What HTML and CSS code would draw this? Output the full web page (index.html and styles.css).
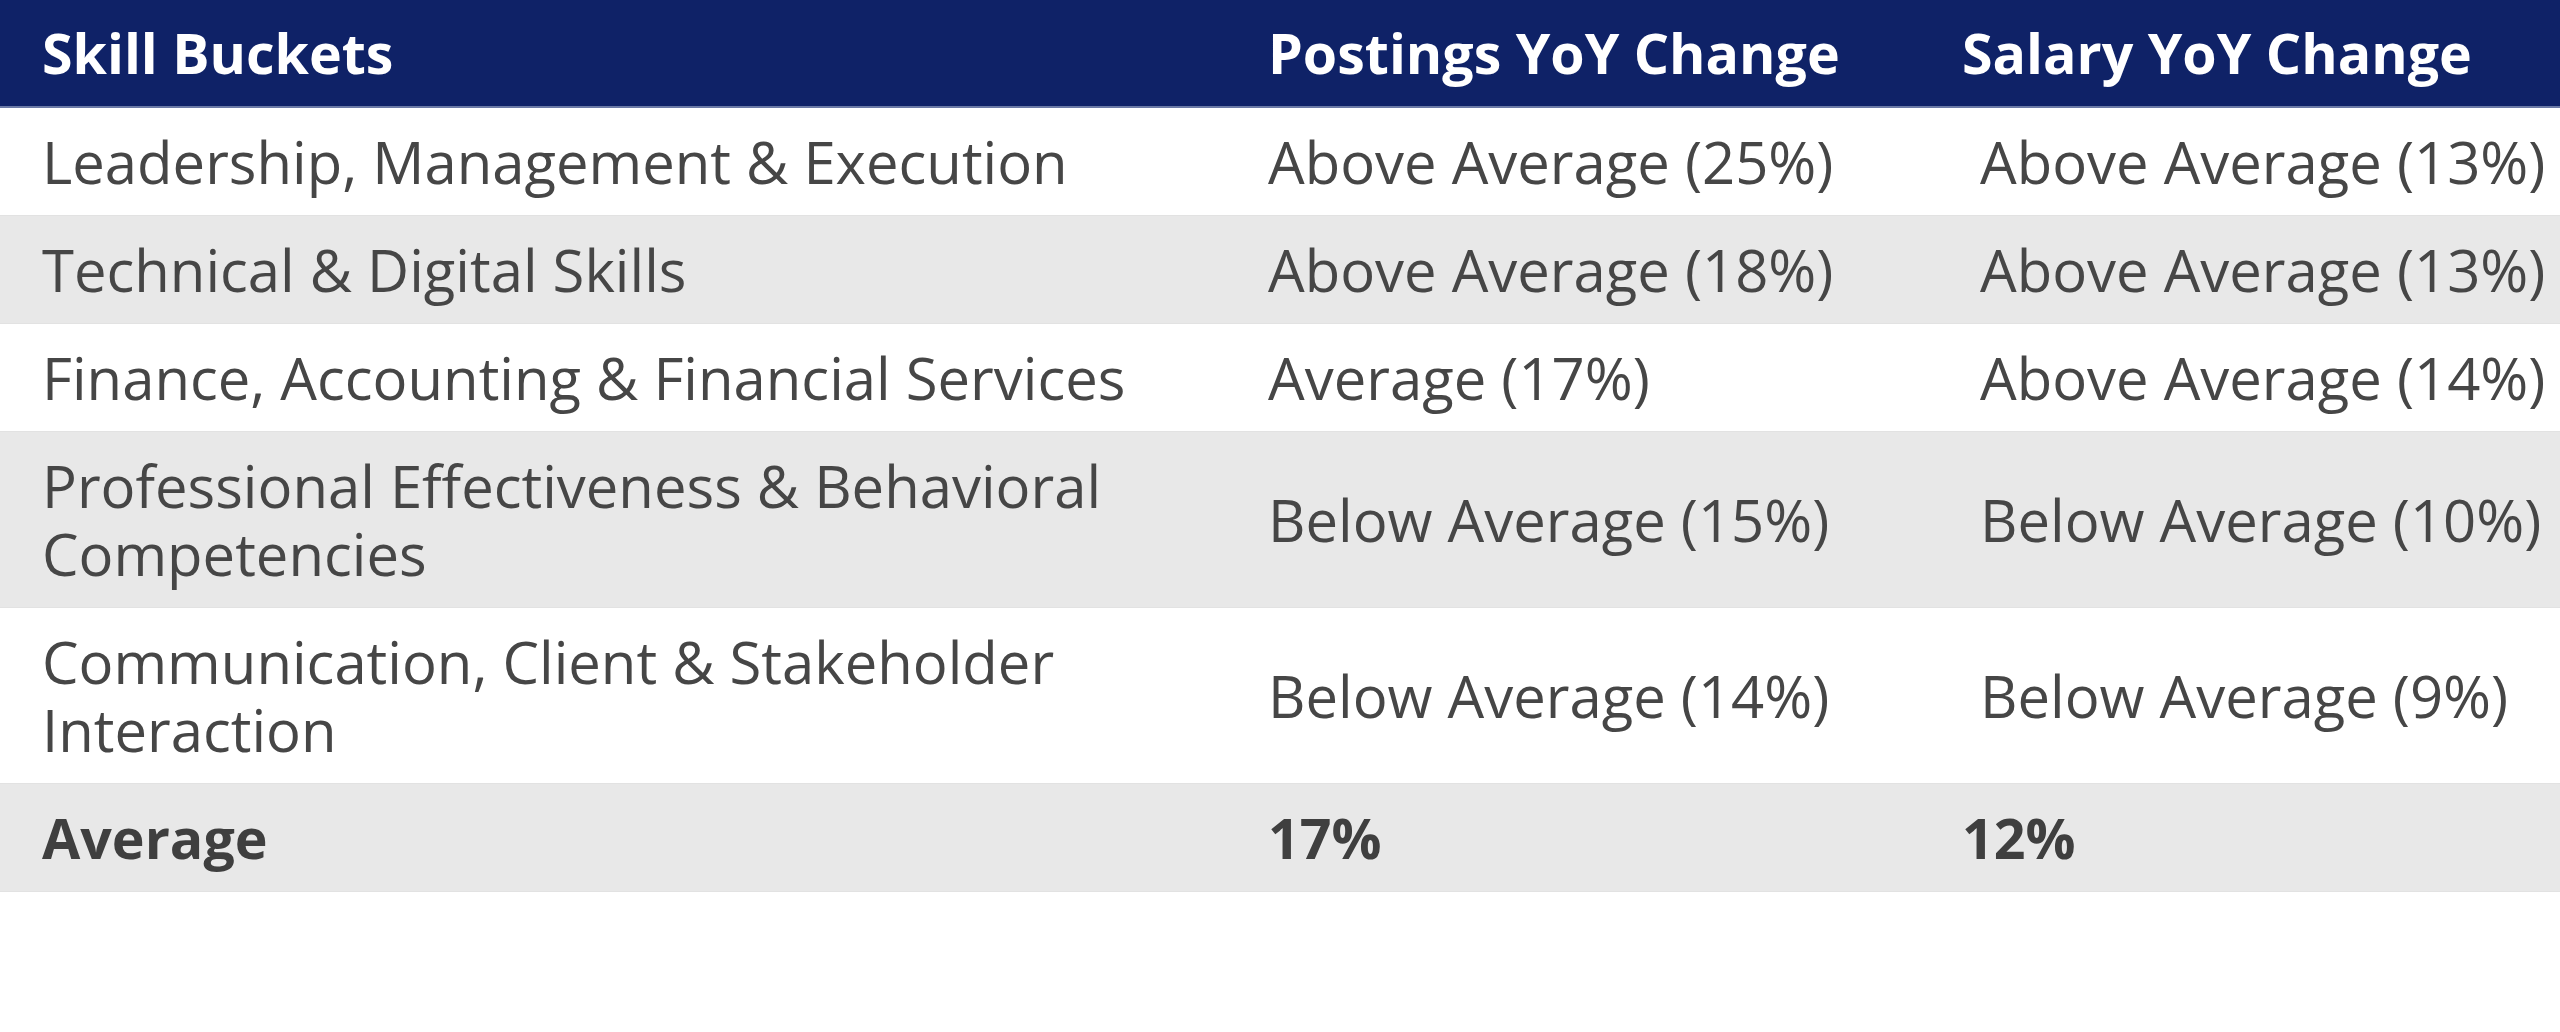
FILE: index.html
```html
<!DOCTYPE html>
<html lang="en">
<head>
<meta charset="utf-8">
<title>Skill Buckets</title>
<link rel="stylesheet" href="styles.css">
</head>
<body>
<table class="skills">
  <colgroup>
    <col class="c-skill">
    <col class="c-post">
    <col class="c-sal">
  </colgroup>
  <thead>
    <tr>
      <th>Skill Buckets</th>
      <th>Postings YoY Change</th>
      <th>Salary YoY Change</th>
    </tr>
  </thead>
  <tbody>
    <tr>
      <td>Leadership, Management &amp; Execution</td>
      <td class="val">Above Average (25%)</td>
      <td class="val sal">Above Average (13%)</td>
    </tr>
    <tr class="alt">
      <td>Technical &amp; Digital Skills</td>
      <td class="val">Above Average (18%)</td>
      <td class="val sal">Above Average (13%)</td>
    </tr>
    <tr>
      <td>Finance, Accounting &amp; Financial Services</td>
      <td class="val">Average (17%)</td>
      <td class="val sal">Above Average (14%)</td>
    </tr>
    <tr class="alt">
      <td>Professional Effectiveness &amp; Behavioral Competencies</td>
      <td class="val">Below Average (15%)</td>
      <td class="val sal">Below Average (10%)</td>
    </tr>
    <tr>
      <td>Communication, Client &amp; Stakeholder Interaction</td>
      <td class="val">Below Average (14%)</td>
      <td class="val sal">Below Average (9%)</td>
    </tr>
    <tr class="alt total">
      <td>Average</td>
      <td class="val">17%</td>
      <td class="val">12%</td>
    </tr>
  </tbody>
</table>
</body>
</html>
```
FILE: styles.css
```css
html, body {
  margin: 0;
  padding: 0;
  background: #ffffff;
}

body {
  font-family: "Open Sans", "Noto Sans", sans-serif;
  color: #464646;
}

.skills {
  width: 2560px;
  table-layout: fixed;
  border-collapse: collapse;
  border-spacing: 0;
}

.c-skill { width: 1226px; }
.c-post { width: 694px; }
.c-sal { width: 640px; }

.skills th {
  background: #0f2267;
  color: #ffffff;
  font-size: 55.5px;
  font-weight: 700;
  text-align: left;
  height: 106px;
  padding: 0 0 0 42px;
  border-bottom: 2px solid #6b7aa6;
  line-height: 66px;
  vertical-align: middle;
  white-space: nowrap;
}

.skills td {
  font-size: 58px;
  font-weight: 400;
  line-height: 68px;
  padding: 19.5px 20px 19.5px 42px;
  vertical-align: middle;
  border-bottom: 1px solid #e2e2e2;
  text-align: left;
}

.skills td.val {
  white-space: nowrap;
  padding-right: 0;
}

.skills td.sal {
  padding-left: 60px;
}

.skills tr.alt td {
  background: #e8e8e8;
}

.skills tr.total td {
  font-weight: 700;
  font-size: 55.5px;
  color: #3f3f3f;
}
```
